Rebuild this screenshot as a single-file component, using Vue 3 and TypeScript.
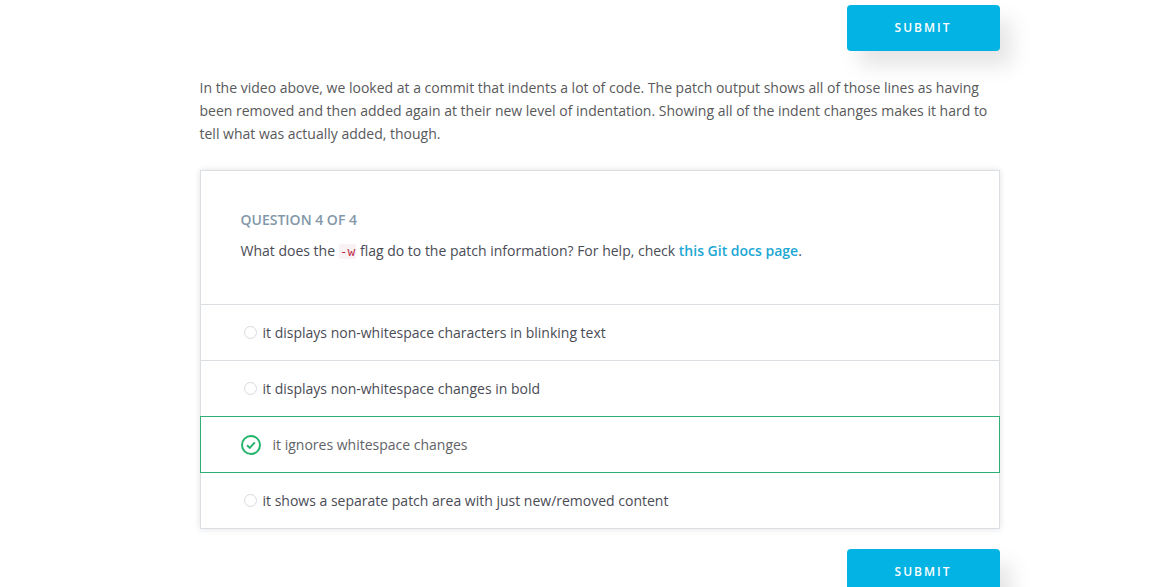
<script setup lang="ts">
import { ref } from 'vue'

interface Answer {
  id: string
  text: string
}

const answers: Answer[] = [
  { id: 'blink', text: 'it displays non-whitespace characters in blinking text' },
  { id: 'bold', text: 'it displays non-whitespace changes in bold' },
  { id: 'ignore', text: 'it ignores whitespace changes' },
  { id: 'separate', text: 'it shows a separate patch area with just new/removed content' },
]
const correctId = 'ignore'
const selected = ref<string>(correctId)
</script>

<template>
  <div class="page">
    <main class="lesson">
      <div class="actions">
        <button type="button" class="submit">SUBMIT</button>
      </div>
      <p class="intro">
        In the video above, we looked at a commit that indents a lot of code. The patch output shows all of those lines as having been removed and then added again at their new level of indentation. Showing all of the indent changes makes it hard to tell what was actually added, though.
      </p>
      <form class="quiz" @submit.prevent>
        <header class="question">
          <h2>QUESTION 4 OF 4</h2>
          <p>What does the <code>-w</code> flag do to the patch information? For help, check <a href="#">this Git docs page</a>.</p>
        </header>
        <label
          v-for="answer in answers"
          :key="answer.id"
          class="answer"
          :class="{ correct: selected === answer.id && answer.id === correctId }"
        >
          <input v-model="selected" type="radio" name="answer" :value="answer.id" />
          <svg v-if="selected === answer.id && answer.id === correctId" class="tick" viewBox="0 0 20 20" aria-hidden="true">
            <circle cx="10" cy="10" r="9" />
            <path d="M6 10.2 8.8 12.9 13.8 7.4" />
          </svg>
          <span>{{ answer.text }}</span>
        </label>
      </form>
      <div class="actions last">
        <button type="button" class="submit">SUBMIT</button>
      </div>
    </main>
  </div>
</template>

<style>
body {
  margin: 0;
  background: #fff;
  overflow: hidden;
}
</style>

<style scoped>
.page {
  padding: 5px 0 0 42px;
  font-family: "Open Sans", sans-serif;
  font-size: 14px;
  line-height: 23px;
  color: #58595b;
}
.lesson {
  max-width: 800px;
  margin: 0 auto;
}
.actions {
  display: flex;
  justify-content: flex-end;
}
.submit {
  width: 153px;
  height: 46px;
  padding: 0;
  border: 0;
  border-radius: 4px;
  background: #02b3e4;
  color: #fff;
  font: 600 12px/20px "Open Sans", sans-serif;
  letter-spacing: 2px;
  box-shadow: 12px 15px 20px rgba(0, 0, 0, 0.1);
}
.intro {
  margin: 25px 0;
}
.quiz {
  border: 1px solid #dbdfe3;
  box-shadow: 0 0 6px rgba(46, 61, 73, 0.15);
  color: #4a4c55;
}
.question {
  padding: 37px 40px 42px;
}
.question h2 {
  margin: 0 0 8px;
  font-size: 14px;
  line-height: 23px;
  font-weight: 600;
  color: #8297a8;
}
.question p {
  margin: 0;
}
.question code {
  padding: 0 1px;
  border-radius: 2px;
  background: #f9f2f4;
  color: #c0304c;
  font: 13px "DejaVu Sans Mono", monospace;
}
.question a {
  color: #21a7d3;
  font-weight: 600;
  text-decoration: none;
}
.answer {
  display: flex;
  align-items: center;
  height: 55px;
  padding: 0 43px;
  border-top: 1px solid #dbdfe3;
}
.answer input {
  appearance: none;
  box-sizing: border-box;
  width: 13px;
  height: 13px;
  margin: 0 6px 0 0;
  border: 1px solid #d8dae0;
  border-radius: 50%;
}
.answer.correct {
  position: relative;
  margin: 0 -1px -1px;
  padding: 0 40px;
  border: 1px solid #2eaf73;
  color: #626367;
}
.answer.correct input {
  position: absolute;
  opacity: 0;
}
.tick {
  width: 20px;
  height: 20px;
  margin-right: 12px;
  fill: none;
  stroke: #24b56d;
  stroke-width: 2;
}
.last {
  margin-top: 20px;
}
</style>
